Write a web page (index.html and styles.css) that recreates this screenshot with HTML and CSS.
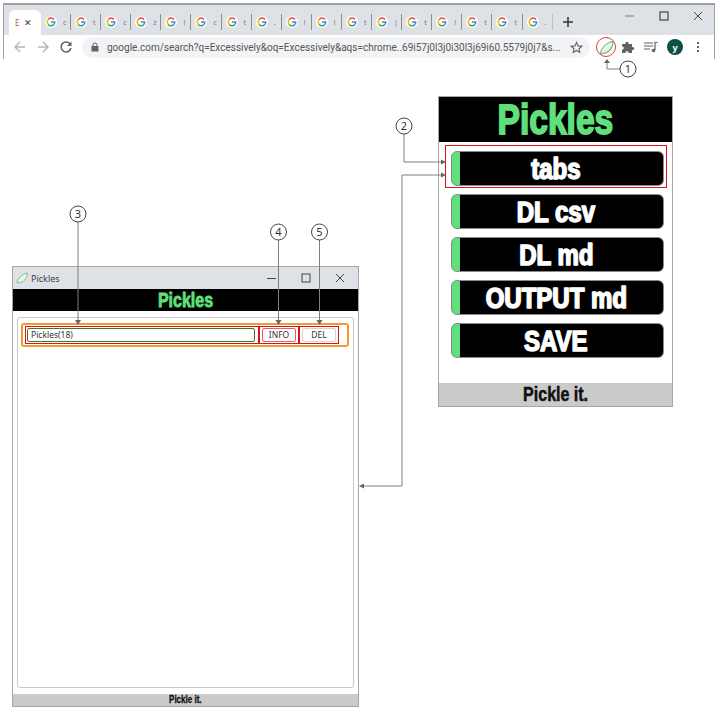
FILE: index.html
```html
<!DOCTYPE html>
<html lang="en">
<head>
  <meta charset="UTF-8" />
  <meta name="viewport" content="width=device-width, initial-scale=1" />
  <title>Pickles</title>
  <link rel="stylesheet" href="styles.css">
</head>
<body>
  <svg class="defs" width="0" height="0">
    <symbol id="g-icon" viewBox="0 0 16 16">
      <circle cx="8" cy="8" r="8" fill="#fff"/>
      <path d="M12 4.600A5 5 0 0 0 4.200 4.800" fill="none" stroke="#ea4335" stroke-width="2"/>
      <path d="M4.200 4.800A5 5 0 0 0 4.200 11.200" fill="none" stroke="#fbbc05" stroke-width="2"/>
      <path d="M4.200 11.200A5 5 0 0 0 11.800 11.200" fill="none" stroke="#34a853" stroke-width="2"/>
      <path d="M11.800 11.200A5 5 0 0 0 13 8H8" fill="none" stroke="#4285f4" stroke-width="2"/>
    </symbol>
    <symbol id="leaf" viewBox="0 0 20 20">
      <path d="M1.500 18C3 11 9 4 18.500 1.500C19.500 10 13 19 1.500 18Z" fill="#e9f6ea" stroke="#74bd84" stroke-width="1.600" stroke-linejoin="round"/>
    </symbol>
  </svg>

  <!-- browser chrome -->
  <div class="browser">
    <div class="tabstrip">
      <div class="tab-active"><span class="tab-e">E</span><span class="tab-x">✕</span></div>
      <div class="tab"><svg class="fav"><use href="#g-icon"/></svg><span>c</span></div>
      <div class="tab"><svg class="fav"><use href="#g-icon"/></svg><span>t</span></div>
      <div class="tab"><svg class="fav"><use href="#g-icon"/></svg><span>c</span></div>
      <div class="tab"><svg class="fav"><use href="#g-icon"/></svg><span>z</span></div>
      <div class="tab"><svg class="fav"><use href="#g-icon"/></svg><span>l</span></div>
      <div class="tab"><svg class="fav"><use href="#g-icon"/></svg><span>c</span></div>
      <div class="tab"><svg class="fav"><use href="#g-icon"/></svg><span>t</span></div>
      <div class="tab"><svg class="fav"><use href="#g-icon"/></svg><span>.</span></div>
      <div class="tab"><svg class="fav"><use href="#g-icon"/></svg><span>l</span></div>
      <div class="tab"><svg class="fav"><use href="#g-icon"/></svg><span>l</span></div>
      <div class="tab"><svg class="fav"><use href="#g-icon"/></svg><span>t</span></div>
      <div class="tab"><svg class="fav"><use href="#g-icon"/></svg><span>|</span></div>
      <div class="tab"><svg class="fav"><use href="#g-icon"/></svg><span>t</span></div>
      <div class="tab"><svg class="fav"><use href="#g-icon"/></svg><span>l</span></div>
      <div class="tab"><svg class="fav"><use href="#g-icon"/></svg><span>t</span></div>
      <div class="tab"><svg class="fav"><use href="#g-icon"/></svg><span>t</span></div>
      <div class="tab tab-last"><svg class="fav"><use href="#g-icon"/></svg><span>.</span></div>
      <svg class="new-tab" width="12" height="12" viewBox="0 0 12 12"><path d="M6 1V11M1 6H11" stroke="#333" stroke-width="1.500"/></svg>
      <div class="win-controls">
        <svg width="12" height="12" viewBox="0 0 12 12"><path d="M1 6H10" stroke="#888" stroke-width="1.200"/></svg>
        <svg width="12" height="12" viewBox="0 0 12 12"><rect x="2" y="2" width="8" height="8" fill="none" stroke="#444" stroke-width="1.200"/></svg>
        <svg width="12" height="12" viewBox="0 0 12 12"><path d="M2 2L10 10M10 2L2 10" stroke="#444" stroke-width="1"/></svg>
      </div>
    </div>
    <div class="toolbar">
      <svg class="nav" width="14" height="14" viewBox="0 0 14 14"><path d="M12 7H2.500M7 2L2 7L7 12" fill="none" stroke="#b5b8bc" stroke-width="1.500"/></svg>
      <svg class="nav" width="14" height="14" viewBox="0 0 14 14"><path d="M2 7H11.500M7 2L12 7L7 12" fill="none" stroke="#b5b8bc" stroke-width="1.500"/></svg>
      <svg class="nav" width="14" height="14" viewBox="0 0 14 14"><path d="M11.500 4.500A5 5 0 1 0 12 8" fill="none" stroke="#5f6368" stroke-width="1.500"/><path d="M12.500 1.500V6H8Z" fill="#5f6368"/></svg>
      <div class="omnibox">
        <svg class="lock" width="8" height="10" viewBox="0 0 8 10"><path d="M2 4V3A2 2 0 0 1 6 3V4" fill="none" stroke="#5f6368" stroke-width="1"/><rect x="0.500" y="4" width="7" height="5.500" fill="#5f6368"/></svg>
        <span class="url">google.com/search?q=Excessively&amp;oq=Excessively&amp;aqs=chrome..69i57j0l3j0i30l3j69i60.5579j0j7&amp;s...</span>
        <svg class="star" width="13" height="13" viewBox="0 0 14 14"><path d="M7 1.500L8.600 5.300L12.700 5.600L9.600 8.300L10.500 12.300L7 10.200L3.500 12.300L4.400 8.300L1.300 5.600L5.400 5.300Z" fill="none" stroke="#5f6368" stroke-width="1.200"/></svg>
      </div>
      <div class="ext-ring"><svg width="15" height="15"><use href="#leaf"/></svg></div>
      <svg class="puzzle" width="14" height="14" viewBox="0 0 14 14"><path d="M1 4H4.500C4 1 8 1 7.500 4H11V7C14 6.500 14 10.500 11 10V13H7.500C8 10.500 4 10.500 4.500 13H1V9.500C3.500 10 3.500 6 1 6.500Z" fill="#5f6368"/></svg>
      <svg class="media" width="14" height="12" viewBox="0 0 14 12"><path d="M0 2H9M0 5H9M0 8H6" stroke="#5f6368" stroke-width="1.200"/><path d="M11 9V1.500H13.500" fill="none" stroke="#5f6368" stroke-width="1.200"/><circle cx="9.500" cy="9.500" r="1.800" fill="#5f6368"/></svg>
      <div class="avatar">y</div>
      <div class="kebab"><i></i><i></i><i></i></div>
    </div>
  </div>

  <!-- popup -->
  <div class="popup">
    <div class="popup-head"><span class="squeeze">Pickles</span></div>
    <div class="popup-list">
      <div class="pop-btn"><span class="squeeze">tabs</span></div>
      <div class="pop-btn"><span class="squeeze">DL csv</span></div>
      <div class="pop-btn"><span class="squeeze">DL md</span></div>
      <div class="pop-btn"><span class="squeeze">OUTPUT md</span></div>
      <div class="pop-btn"><span class="squeeze">SAVE</span></div>
    </div>
    <div class="popup-foot"><span class="squeeze">Pickle it.</span></div>
  </div>

  <!-- tabs window -->
  <div class="window">
    <div class="titlebar">
      <svg width="12" height="12"><use href="#leaf"/></svg>
      <span class="title-text">Pickles</span>
      <div class="title-controls">
        <svg width="12" height="12" viewBox="0 0 12 12"><path d="M1 6.500H10" stroke="#444" stroke-width="1"/></svg>
        <svg width="12" height="12" viewBox="0 0 12 12"><rect x="2" y="2" width="8" height="8" fill="none" stroke="#444" stroke-width="1"/></svg>
        <svg width="12" height="12" viewBox="0 0 12 12"><path d="M2 2L10 10M10 2L2 10" stroke="#444" stroke-width="1"/></svg>
      </div>
    </div>
    <div class="win-head"><span class="squeeze">Pickles</span></div>
    <div class="win-body">
      <div class="panel">
        <div class="row">
          <div class="mark mark-name"><div class="name-field">Pickles(18)</div></div>
          <div class="mark"><div class="small-btn btn-info">INFO</div></div>
          <div class="mark"><div class="small-btn">DEL</div></div>
        </div>
      </div>
    </div>
    <div class="win-foot"><span class="squeeze">Pickle it.</span></div>
  </div>

  <!-- red box around the tabs button -->
  <div class="tabs-mark"></div>

  <!-- callouts -->
  <svg class="callouts" width="720" height="720" viewBox="0 0 720 720">
    <g fill="none" stroke="#808080" stroke-width="1">
      <path d="M620 69H607V62"/>
      <path d="M404 134V162H441"/>
      <path d="M362 486H402V175H441"/>
      <path d="M78 222V320"/>
      <path d="M278.500 240V320"/>
      <path d="M319.500 240V320"/>
    </g>
    <g fill="#666">
      <path d="M607 59L604 63H610Z"/>
      <path d="M446 162L441 159.500V164.500Z"/>
      <path d="M446 175L441 172.500V177.500Z"/>
      <path d="M359 486L364 483.500V488.500Z"/>
      <path d="M78 325L75 320H81Z"/>
      <path d="M278.500 325L275.500 320H281.500Z"/>
      <path d="M319.500 325L316.500 320H322.500Z"/>
    </g>
    <g fill="#fff" stroke="#444" stroke-width="1">
      <circle cx="628" cy="69" r="8"/>
      <circle cx="404" cy="126" r="8"/>
      <circle cx="78" cy="214" r="8"/>
      <circle cx="278.500" cy="232" r="8"/>
      <circle cx="319.500" cy="232" r="8"/>
    </g>
    <g class="num" text-anchor="middle">
      <text x="628" y="73">1</text>
      <text x="404" y="130">2</text>
      <text x="78" y="218">3</text>
      <text x="278.500" y="236">4</text>
      <text x="319.500" y="236">5</text>
    </g>
  </svg>
</body>
</html>
```

FILE: styles.css
```css
* {
  box-sizing: border-box;
}
body {
  margin: 0;
  width: 720px;
  height: 720px;
  background: #fff;
  position: relative;
  overflow: hidden;
  font-family: "Noto Sans", Arial, sans-serif;
}
.defs {
  position: absolute;
}

/* browser */
.browser {
  position: absolute;
  left: 3px;
  top: 3px;
  width: 712px;
  height: 56px;
  border: 1px solid #a0a0a0;
  border-top-width: 2px;
  border-bottom: none;
}
.tabstrip {
  display: flex;
  align-items: flex-end;
  height: 30px;
  background: #dee1e6;
  padding-left: 5px;
  position: relative;
}
.tab-active {
  width: 32px;
  height: 25px;
  background: #fff;
  border-radius: 6px 6px 0 0;
  display: flex;
  align-items: center;
  padding-left: 6px;
  gap: 5px;
}
.tab-e {
  font-size: 8px;
  color: #b5544c;
}
.tab-x {
  font-size: 9px;
  color: #333;
}
.tab {
  width: 30.100px;
  height: 16px;
  margin-bottom: 5px;
  padding-left: 4px;
  display: flex;
  align-items: center;
  gap: 6px;
  border-right: 1px solid #8b8d90;
  font-size: 7px;
  color: #777;
}
.tab-last {
  border-right: 1px solid #bfc1c5;
}
.fav {
  width: 12px;
  height: 12px;
  flex: none;
}
.new-tab {
  margin: 0 0 7px 9px;
}
.win-controls {
  display: flex;
  gap: 22px;
  margin-left: auto;
  margin-right: 10px;
  align-self: flex-start;
  padding-top: 5px;
}
.toolbar {
  display: flex;
  align-items: center;
  height: 24px;
  background: #fff;
  padding-left: 9px;
}
.nav {
  margin-right: 9px;
  flex: none;
}
.omnibox {
  width: 508px;
  height: 21px;
  background: #f1f3f4;
  border-radius: 11px;
  display: flex;
  align-items: center;
  padding-left: 9px;
  flex: none;
}
.lock {
  flex: none;
}
.url {
  margin-left: 8px;
  font-family: Roboto, Arial, sans-serif;
  font-size: 10px;
  color: #555;
  white-space: nowrap;
  flex: none;
}
.star {
  margin-left: auto;
  margin-right: 7px;
  flex: none;
}
.ext-ring {
  width: 20px;
  height: 20px;
  margin-left: 6px;
  border: 1px solid #e8383d;
  border-radius: 50%;
  display: flex;
  align-items: center;
  justify-content: center;
  flex: none;
}
.puzzle {
  margin-left: 5px;
  flex: none;
}
.media {
  margin-left: 9px;
  flex: none;
}
.avatar {
  width: 16px;
  height: 16px;
  margin-left: 9px;
  border-radius: 50%;
  background: #0b4f45;
  color: #fff;
  font-size: 9px;
  font-weight: 700;
  display: flex;
  align-items: center;
  justify-content: center;
  flex: none;
}
.kebab {
  margin-left: 14px;
  display: flex;
  flex-direction: column;
  gap: 2px;
}
.kebab i {
  width: 2px;
  height: 2px;
  background: #5f6368;
  display: block;
}

/* heavy headline text, no Impact here so squeeze the bold face */
.popup-head,
.pop-btn,
.popup-foot,
.win-head,
.win-foot {
  font-family: "Liberation Sans", Arial, sans-serif;
  font-weight: 700;
  white-space: nowrap;
  text-align: center;
}
.squeeze {
  display: inline-block;
  transform: scaleX(0.8);
}

/* popup */
.popup {
  position: absolute;
  left: 438px;
  top: 96px;
  width: 235px;
  height: 311px;
  border: 1px solid #a6a6a6;
  display: flex;
  flex-direction: column;
  background: #fff;
}
.popup-head {
  height: 45px;
  background: #000;
  color: #5fe07c;
  font-size: 42px;
  line-height: 45px;
  -webkit-text-stroke: 1.800px #5fe07c;
}
.popup-list {
  flex: 1;
  display: flex;
  flex-direction: column;
  gap: 8px;
  padding: 9px 8px 0 12px;
}
.pop-btn {
  height: 35px;
  padding-right: 3px;
  background: linear-gradient(90deg, #5fe07c 8px, #000 8px);
  border: 1px solid #8a8a8a;
  border-radius: 6px;
  color: #fff;
  font-size: 30px;
  line-height: 33px;
  -webkit-text-stroke: 1.400px #fff;
  text-shadow: 1px 0 0 #c9823a, -1px 0 0 #3f7fe0;
}
.popup-foot {
  height: 23px;
  background: #cbcbcb;
  color: #111;
  font-size: 20px;
  line-height: 23px;
  -webkit-text-stroke: 0.500px #111;
}

/* red box */
.tabs-mark {
  position: absolute;
  left: 445px;
  top: 145px;
  width: 222px;
  height: 43px;
  border: 1px solid #e0101a;
}

/* window */
.window {
  position: absolute;
  left: 12px;
  top: 266px;
  width: 347px;
  height: 441px;
  border: 1px solid #a6a6a6;
  display: flex;
  flex-direction: column;
  background: #fff;
}
.titlebar {
  height: 22px;
  background: #dee1e6;
  display: flex;
  align-items: center;
  padding-left: 3px;
  flex: none;
}
.title-text {
  font-size: 9px;
  color: #444;
  margin-left: 3px;
}
.title-controls {
  margin-left: auto;
  margin-right: 12px;
  display: flex;
  gap: 22px;
}
.win-head {
  height: 22px;
  background: #000;
  color: #5fe07c;
  font-size: 20px;
  line-height: 22px;
  -webkit-text-stroke: 0.800px #5fe07c;
  flex: none;
}
.win-body {
  flex: 1;
  padding: 6px 4px 6px 4px;
  display: flex;
}
.panel {
  flex: 1;
  border: 1px solid #c8c8c8;
  border-radius: 3px;
  padding: 5px 4px 0 3px;
}
.row {
  height: 24px;
  border: 2px solid #f59a2e;
  border-radius: 3px;
  display: flex;
  align-items: center;
  padding-left: 2px;
}
.mark {
  height: 18px;
  width: 40px;
  border: 1px solid #e0101a;
  display: flex;
  align-items: center;
  justify-content: center;
}
.mark-name {
  width: 234px;
  padding: 0 3px 0 1px;
}
.name-field {
  width: 100%;
  height: 14px;
  border: 1px solid #3f7a1f;
  border-radius: 2px;
  font-size: 8.500px;
  line-height: 12px;
  padding-left: 3px;
  color: #333;
}
.small-btn {
  width: 34px;
  height: 14px;
  border: 1px solid #d4d4d4;
  border-radius: 2px;
  font-size: 8.500px;
  line-height: 12px;
  text-align: center;
  color: #333;
}
.btn-info {
  border-color: #e4606a;
}
.win-foot {
  height: 12px;
  background: #cbcbcb;
  color: #111;
  font-size: 10px;
  line-height: 12px;
  -webkit-text-stroke: 0.300px #111;
  flex: none;
}

/* callouts */
.callouts {
  position: absolute;
  left: 0;
  top: 0;
}
.num text {
  font-family: "Noto Sans", Arial, sans-serif;
  font-size: 11px;
  fill: #333;
}
```
